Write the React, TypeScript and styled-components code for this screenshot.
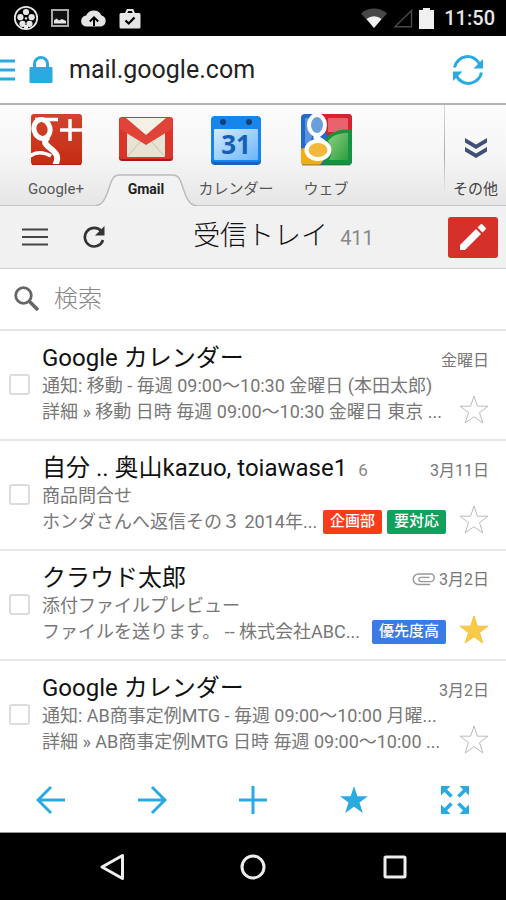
import React from "react";
import styled, { createGlobalStyle } from "styled-components";

const BLUE = "#29abe2";

const GlobalStyle = createGlobalStyle`
  *, *::before, *::after { box-sizing: border-box; }
  body {
    margin: 0;
    background: #fff;
    color: #111;
    font-family: Roboto, "Noto Sans CJK JP", sans-serif;
  }
  button, input { font: inherit; color: inherit; }
  svg { display: block; flex: none; }
`;

const Screen = styled.div`
  display: flex;
  flex-direction: column;
  min-height: 100vh;
`;

const IconButton = styled.button<{ $width?: number; $height?: number; $align?: string }>`
  display: flex;
  align-items: center;
  justify-content: ${(p) => p.$align ?? "center"};
  flex: none;
  width: ${(p) => (p.$width ? `${p.$width}px` : "auto")};
  height: ${(p) => (p.$height ? `${p.$height}px` : "auto")};
  padding: 0;
  border: 0;
  background: none;
  cursor: pointer;
`;

/* Status bar */

const StatusBar = styled.div`
  display: flex;
  align-items: center;
  justify-content: space-between;
  height: 36px;
  padding: 0 11px 0 13px;
  background: #000;
  color: #e6e6e6;
`;

const StatusGroup = styled.div<{ $gap: number }>`
  display: flex;
  align-items: center;
  gap: ${(p) => p.$gap}px;
`;

const Clock = styled.time`
  margin-left: 4px;
  font-size: 20px;
  line-height: 24px;
  font-weight: 500;
`;

/* Address bar */

const AddressBar = styled.header`
  display: flex;
  align-items: center;
  height: 69px;
  padding-right: 20px;
  border-bottom: 2px solid #b4b4b4;
  background: #fff;
`;

const Lock = styled.span`
  padding: 0 16px 0 13px;
`;

const UrlInput = styled.input`
  flex: 1;
  min-width: 0;
  height: 40px;
  padding: 0;
  border: 0;
  outline: 0;
  background: none;
  color: #222;
  font-size: 25px;
`;

/* Service launcher */

const Launcher = styled.nav`
  display: flex;
  height: 101px;
  padding-left: 11px;
  border-bottom: 1px solid #c4c4c4;
  background: linear-gradient(#fcfcfc, #f6f6f6 50%, #e6e6e6);
`;

const Service = styled.a`
  position: relative;
  display: flex;
  flex-direction: column;
  align-items: center;
  width: 90px;
  padding-top: 8px;
  color: #444;
  text-decoration: none;
`;

const ServiceLabel = styled.span<{ $active?: boolean }>`
  position: relative;
  margin-top: 12px;
  font-size: ${(p) => (p.$active ? 14 : 15)}px;
  line-height: 20px;
  white-space: nowrap;
  color: ${(p) => (p.$active ? "#222" : "#555")};
  font-weight: ${(p) => (p.$active ? 700 : 400)};
`;

const TabShape = styled.svg`
  position: absolute;
  left: 50%;
  bottom: -1px;
  margin-left: -50px;
`;

const More = styled.button`
  display: flex;
  flex-direction: column;
  align-items: center;
  width: 62px;
  margin: 0 0 0 auto;
  padding: 32px 0 0;
  border: 0;
  border-left: 1px solid;
  border-image: linear-gradient(#ddd, #aaa 50%, transparent 88%) 1;
  background: none;
  cursor: pointer;
`;

const MoreLabel = styled.span`
  margin-top: 20px;
  color: #444;
  font-size: 15px;
  line-height: 20px;
`;

/* Mailbox toolbar */

const Toolbar = styled.div`
  display: flex;
  align-items: center;
  height: 63px;
  padding: 0 8px 0 5px;
  border-bottom: 1px solid #cfcfcf;
  background: #f1f1f1;
`;

const MailboxTitle = styled.h1`
  display: flex;
  flex: 1;
  align-items: baseline;
  justify-content: center;
  gap: 12px;
  margin: 0;
  padding-right: 4px;
  font-size: 27px;
  line-height: 36px;
  font-weight: 300;
  color: #111;
`;

const UnreadCount = styled.span`
  color: #888;
  font-size: 20px;
  font-weight: 400;
`;

const ComposeButton = styled(IconButton)`
  width: 50px;
  height: 41px;
  border-radius: 3px;
  background: #d5302a;
`;

const SearchForm = styled.form`
  display: flex;
  align-items: center;
  gap: 14px;
  height: 62px;
  padding: 0 14px;
  border-bottom: 2px solid #e4e4e4;
`;

const SearchInput = styled.input`
  flex: 1;
  min-width: 0;
  height: 40px;
  padding: 0;
  border: 0;
  outline: 0;
  background: none;
  font-size: 24px;
  font-weight: 300;
  &::placeholder { color: #888; opacity: 1; }
`;

/* Message list */

const MessageList = styled.ul`
  flex: 1;
  margin: 0;
  padding: 0;
  list-style: none;
`;

const Message = styled.li`
  display: flex;
  align-items: center;
  padding: 12px 17px 14px 9px;
  border-bottom: 2px solid #e8e8e8;
  &:last-child { border-bottom: 0; padding-bottom: 11px; }
`;

const Check = styled.input`
  appearance: none;
  flex: none;
  width: 21px;
  height: 21px;
  margin: 0 12px 0 0;
  border: 2px solid #dcdcdc;
  border-radius: 3px;
  background: #fff;
  &:checked { background: ${BLUE}; }
`;

const MessageMain = styled.div`
  flex: 1;
  min-width: 0;
`;

const MessageHead = styled.div`
  display: flex;
  align-items: baseline;
  height: 30px;
  line-height: 30px;
`;

const Sender = styled.h2`
  margin: 0;
  font-size: 24px;
  font-weight: 400;
  color: #111;
  white-space: nowrap;
`;

const ThreadCount = styled.span`
  margin-left: 11px;
  color: #888;
  font-size: 17px;
`;

const MessageDate = styled.span`
  display: flex;
  align-items: center;
  gap: 4px;
  margin-left: auto;
  color: #777;
  font-size: 16px;
  white-space: nowrap;
`;

const MessageBody = styled.div`
  display: flex;
  align-items: flex-end;
`;

const Snippets = styled.div`
  flex: 1;
  min-width: 0;
`;

const SnippetLine = styled.div`
  display: flex;
  align-items: center;
  gap: 5px;
  height: 26px;
  color: #777;
  font-size: 18px;
  line-height: 26px;
`;

const SnippetText = styled.span`
  flex: 1;
  min-width: 0;
  white-space: nowrap;
`;

const Tag = styled.span<{ $color: string }>`
  flex: none;
  height: 24px;
  padding: 0 7px;
  border-radius: 2px;
  background: ${(p) => p.$color};
  color: #fff;
  font-size: 15px;
  line-height: 22px;
  font-weight: 500;
`;

/* Bottom bars */

const BrowserBar = styled.nav`
  display: grid;
  grid-template-columns: repeat(5, 1fr);
  justify-items: center;
  align-items: center;
  height: 66px;
  border-bottom: 1px solid #999;
  background: #fff;
`;

const SystemBar = styled.nav`
  display: grid;
  grid-template-columns: repeat(3, 28%);
  justify-content: center;
  justify-items: center;
  align-items: center;
  height: 67px;
  background: #000;
`;

/* Icons */

const STAR = "M15 1 L18.4 11.2 H29 L20.5 17.6 L23.8 28 L15 21.7 L6.2 28 L9.5 17.6 L1 11.2 H11.6 Z";

function Reel() {
  return (
    <svg width="26" height="26" viewBox="0 0 26 26">
      <circle cx="13" cy="13" r="11.2" fill="none" stroke="#e6e6e6" strokeWidth="1.8" />
      <g fill="#e6e6e6">
        <circle cx="13" cy="7" r="3.1" />
        <circle cx="7.4" cy="12.2" r="3.1" />
        <circle cx="18.6" cy="12.2" r="3.1" />
        <circle cx="9.5" cy="18.8" r="3.1" />
        <circle cx="16.5" cy="18.8" r="3.1" />
        <circle cx="13" cy="13.4" r="1.2" />
        <path d="M11 20h4v4h-4z" />
      </g>
    </svg>
  );
}

function Picture() {
  return (
    <svg width="18" height="18" viewBox="0 0 18 18">
      <rect x="1" y="1" width="16" height="16" fill="#111" stroke="#aaa" strokeWidth="2" />
      <path d="M3 14.5v-3l2.5-2 2.5 2 3-1.5 4 2v2.5z" fill="#e6e6e6" />
    </svg>
  );
}

function CloudUp() {
  return (
    <svg width="26" height="18" viewBox="0 0 26 18">
      <path d="M6 17.5a5.5 5.5 0 0 1-.8-11A8.4 8.4 0 0 1 20.6 6.6 5.6 5.6 0 0 1 20 17.5Z" fill="#e6e6e6" />
      <path d="M13 17V9.500M8.800 12.500 13 8.300l4.200 4.200" fill="none" stroke="#000" strokeWidth="2" />
    </svg>
  );
}

function BagCheck() {
  return (
    <svg width="22" height="21" viewBox="0 0 22 21">
      <rect x="0.500" y="5" width="21" height="15.500" rx="1.500" fill="#e6e6e6" />
      <path d="M7 5.500 8.500 2h5L15 5.500" fill="none" stroke="#e6e6e6" strokeWidth="2" />
      <path d="m6.500 12.500 3.200 3 5.800-6" fill="none" stroke="#000" strokeWidth="2.200" />
    </svg>
  );
}

function Wifi() {
  return (
    <svg width="26" height="20" viewBox="0 0 26 20">
      <path d="M0 5.500a19.500 19.500 0 0 1 26 0L13 20Z" fill="#484848" />
      <path d="M5.500 11a11.500 11.500 0 0 1 15 0L13 20Z" fill="#f2f2f2" />
    </svg>
  );
}

function Signal() {
  return (
    <svg width="20" height="20" viewBox="0 0 20 20">
      <path d="M2 18.800H18.500V2.500Z" fill="none" stroke="#484848" strokeWidth="1.500" />
    </svg>
  );
}

function Battery() {
  return (
    <svg width="15" height="21" viewBox="0 0 15 21">
      <path d="M4 0h7v2h4v19H0V2h4z" fill="#f0f0f0" />
    </svg>
  );
}

function SideMenu() {
  return (
    <svg width="16" height="22" viewBox="0 0 16 22">
      <path d="M0 2h15M0 11h15M0 20h15" stroke={BLUE} strokeWidth="3" />
    </svg>
  );
}

function Padlock() {
  return (
    <svg width="24" height="27" viewBox="0 0 24 27">
      <rect x="0.500" y="11" width="23" height="16" rx="1" fill={BLUE} />
      <path d="M5.500 12V8a6.500 6.500 0 0 1 13 0v4" fill="none" stroke={BLUE} strokeWidth="3" />
    </svg>
  );
}

function Sync() {
  return (
    <svg width="32" height="32" viewBox="0 0 32 32">
      <path d="M2.500 13.500A13.300 13.300 0 0 1 27.500 10" fill="none" stroke={BLUE} strokeWidth="3" />
      <path d="M31 5v9.500h-9.500z" fill={BLUE} />
      <path d="M29.500 18.500A13.300 13.300 0 0 1 4.500 22" fill="none" stroke={BLUE} strokeWidth="3" />
      <path d="M1 27v-9.500h9.500z" fill={BLUE} />
    </svg>
  );
}

function PlusLogo() {
  return (
    <svg width="52" height="54" viewBox="0 0 52 54">
      <defs>
        <linearGradient id="plusRed" x1="0" y1="0" x2="0" y2="1">
          <stop offset="0" stopColor="#d2432e" />
          <stop offset="1" stopColor="#c42c12" />
        </linearGradient>
        <clipPath id="plusClip"><rect x="1" y="1" width="51" height="51" rx="3" /></clipPath>
      </defs>
      <rect x="1" y="1" width="51" height="51" rx="3" fill="url(#plusRed)" />
      <g clipPath="url(#plusClip)" fill="none" stroke="#fff">
        <ellipse cx="12" cy="16" rx="8" ry="9.500" strokeWidth="5" transform="rotate(-14 12 16)" />
        <path d="M5 6.500h23" strokeWidth="3.500" />
        <path d="M18 24c-5 5-3 7 2 11s8 7 7 12-2 5-3 8" strokeWidth="6" />
        <path d="M0 43c7-5 14-4 21 0" strokeWidth="3.500" />
        <path d="M40 6v22M30 17h24" strokeWidth="3.500" />
      </g>
      <path d="M2 51.500h49" stroke="#9f2412" strokeWidth="1" />
    </svg>
  );
}

function MailLogo() {
  return (
    <svg width="56" height="54" viewBox="0 0 56 54">
      <rect x="1" y="5" width="54" height="43" rx="3" fill="#a91b17" />
      <rect x="1" y="4" width="54" height="42" rx="3" fill="#d9352b" />
      <rect x="9" y="5" width="38" height="39" fill="#e8e4d4" />
      <path d="M7 5h42L28 25z" fill="#f4f1e4" />
      <path d="M9 44 23 28M47 44 33 28" stroke="#c7c2b0" strokeWidth="1" />
      <path d="M2 5h6l20 17L48 5h6v11L28 32 2 16z" fill="#e04337" />
    </svg>
  );
}

function CalendarLogo() {
  return (
    <svg width="52" height="54" viewBox="0 0 52 54">
      <defs>
        <linearGradient id="calPage" x1="0" y1="0" x2="1" y2="1">
          <stop offset="0" stopColor="#d5ecff" />
          <stop offset="1" stopColor="#6bb5f7" />
        </linearGradient>
      </defs>
      <rect x="1" y="4" width="50" height="48" rx="4" fill="#1463bd" />
      <rect x="1" y="3" width="50" height="46" rx="4" fill="#1686ec" />
      <rect x="4" y="16" width="44" height="31" rx="1" fill="url(#calPage)" />
      <circle cx="13" cy="9" r="3" fill="#123f73" />
      <circle cx="39" cy="9" r="3" fill="#123f73" />
      <text x="26" y="41" textAnchor="middle" fontFamily="Open Sans, sans-serif" fontWeight="700" fontSize="26" fill="#1560b4">31</text>
    </svg>
  );
}

function SearchLogo() {
  return (
    <svg width="52" height="54" viewBox="0 0 52 54">
      <defs>
        <clipPath id="webClip"><rect x="1" y="1" width="51" height="51" rx="4" /></clipPath>
        <linearGradient id="webGreen" x1="0" y1="0" x2="1" y2="1">
          <stop offset="0" stopColor="#8ed07f" />
          <stop offset="1" stopColor="#2c9e42" />
        </linearGradient>
      </defs>
      <g clipPath="url(#webClip)">
        <rect width="52" height="54" fill="#2369c9" />
        <path d="M5 5h12L10 31H5z" fill="#5c94de" />
        <path d="M21 0h31v22H27z" fill="#dc1f2c" />
        <path d="M28 5h20v14H28z" fill="#e8636d" />
        <path d="M20 54c8-8 8-16 4-26 6-9 16-13 28-11v37z" fill="#159440" />
        <path d="M29 47c4-8 3-13-1-19 5-6 11-8 20-8v27z" fill="url(#webGreen)" />
        <path d="M0 36c6-2 14-2 24 4 2 6-2 10-6 14H0z" fill="#f5ad13" />
        <ellipse cx="17" cy="12" rx="8" ry="10" fill="#6a9edc" stroke="#fff" strokeWidth="4" />
        <path d="M17 22c-1 5 2 5 6 8" fill="none" stroke="#fff" strokeWidth="7" />
        <ellipse cx="18" cy="37" rx="11.500" ry="9" fill="#f1b83b" stroke="#fff" strokeWidth="4" />
      </g>
      <path d="M2 52h48" stroke="#14572c" strokeOpacity=".6" />
    </svg>
  );
}

function DoubleChevron() {
  return (
    <svg width="24" height="22" viewBox="0 0 24 22">
      <path d="M1 1v4.500L12 12 23 5.500V1L12 7.500zM1 10v4.500L12 21 23 14.500V10L12 16.500z" fill="#3f5176" />
    </svg>
  );
}

function Hamburger() {
  return (
    <svg width="26" height="18" viewBox="0 0 26 18">
      <path d="M0 1.500h26M0 9h26M0 16.500h26" stroke="#444" strokeWidth="2.200" />
    </svg>
  );
}

function Reload() {
  return (
    <svg width="24" height="24" viewBox="0 0 24 24">
      <path d="M19.500 6.500A9.300 9.300 0 1 0 21 15" fill="none" stroke="#333" strokeWidth="2.600" />
      <path d="M22.500 1v9.500H13z" fill="#333" />
    </svg>
  );
}

function Pencil() {
  return (
    <svg width="28" height="28" viewBox="0 0 28 28">
      <path d="M1 22 17 6l5 5L6 27H1zM18.500 4.500l3-3q1-1 2 0l3 3q1 1 0 2l-3 3z" fill="#fff" />
    </svg>
  );
}

function Magnifier() {
  return (
    <svg width="26" height="26" viewBox="0 0 26 26">
      <circle cx="9.500" cy="9.500" r="7.800" fill="none" stroke="#666" strokeWidth="2.800" />
      <path d="m15.500 15.500 8.500 8.500" stroke="#666" strokeWidth="3.600" />
    </svg>
  );
}

function StarIcon({ filled }: { filled?: boolean }) {
  return (
    <svg width="30" height="30" viewBox="0 0 30 30">
      <path d={STAR} fill={filled ? "#f9ca47" : "none"} stroke={filled ? "#f4c244" : "#bbb"} strokeWidth="1" />
    </svg>
  );
}

function Clip() {
  return (
    <svg width="23" height="13" viewBox="0 0 23 13">
      <path
        d="M18 11.500H6.500a5.200 5.200 0 0 1 0-10.500H18.500a3.700 3.700 0 0 1 0 7.600H9a2.100 2.100 0 0 1 0-4.200h8.500"
        fill="none" stroke="#999" strokeWidth="1.400"
      />
    </svg>
  );
}

function Arrow({ forward }: { forward?: boolean }) {
  return (
    <svg width="30" height="30" viewBox="0 0 30 30">
      <path
        d={forward ? "M1 15h26M15 2l13 13-13 13" : "M29 15H3M15 2 2 15l13 13"}
        fill="none" stroke={BLUE} strokeWidth="3"
      />
    </svg>
  );
}

function Plus() {
  return (
    <svg width="30" height="30" viewBox="0 0 30 30">
      <path d="M1 15h28M15 1v28" stroke={BLUE} strokeWidth="3" />
    </svg>
  );
}

function Bookmark() {
  return (
    <svg width="30" height="30" viewBox="0 0 30 30">
      <path d={STAR} fill={BLUE} />
    </svg>
  );
}

function Expand() {
  return (
    <svg width="30" height="30" viewBox="0 0 30 30">
      <path d="M1 1h9.500L1 10.500zM29 1v9.500L19.500 1zM1 29v-9.500l9.500 9.500zM29 29h-9.500l9.500-9.500z" fill={BLUE} />
      <path d="m4 4 7.500 7.500M26 4l-7.500 7.500M4 26l7.500-7.500M26 26l-7.500-7.500" stroke={BLUE} strokeWidth="3.600" />
    </svg>
  );
}

const navStroke = { fill: "none", stroke: "#eee", strokeWidth: 3 };

const services = [
  { label: "Google+", logo: <PlusLogo /> },
  { label: "Gmail", logo: <MailLogo />, active: true },
  { label: "カレンダー", logo: <CalendarLogo /> },
  { label: "ウェブ", logo: <SearchLogo /> },
];

type Mail = {
  sender: string;
  count?: number;
  date: string;
  subject: string;
  text: string;
  tags?: { label: string; color: string }[];
  attachment?: boolean;
  starred?: boolean;
};

const mails: Mail[] = [
  {
    sender: "Google カレンダー",
    date: "金曜日",
    subject: "通知: 移動 - 毎週 09:00～10:30 金曜日 (本田太郎)",
    text: "詳細 » 移動 日時 毎週 09:00～10:30 金曜日 東京 ...",
  },
  {
    sender: "自分 .. 奥山kazuo, toiawase1",
    count: 6,
    date: "3月11日",
    subject: "商品問合せ",
    text: "ホンダさんへ返信その３ 2014年...",
    tags: [
      { label: "企画部", color: "#fb3c1c" },
      { label: "要対応", color: "#12a05c" },
    ],
  },
  {
    sender: "クラウド太郎",
    date: "3月2日",
    subject: "添付ファイルプレビュー",
    text: "ファイルを送ります。 -- 株式会社ABC...",
    tags: [{ label: "優先度高", color: "#3b7be6" }],
    attachment: true,
    starred: true,
  },
  {
    sender: "Google カレンダー",
    date: "3月2日",
    subject: "通知: AB商事定例MTG - 毎週 09:00～10:00 月曜...",
    text: "詳細 » AB商事定例MTG 日時 毎週 09:00～10:00 ...",
  },
];

function MessageRow({ mail }: { mail: Mail }) {
  return (
    <Message>
      <Check type="checkbox" aria-label={mail.sender} />
      <MessageMain>
        <MessageHead>
          <Sender>{mail.sender}</Sender>
          {mail.count && <ThreadCount>{mail.count}</ThreadCount>}
          <MessageDate>
            {mail.attachment && <Clip />}
            {mail.date}
          </MessageDate>
        </MessageHead>
        <MessageBody>
          <Snippets>
            <SnippetLine><SnippetText>{mail.subject}</SnippetText></SnippetLine>
            <SnippetLine>
              <SnippetText>{mail.text}</SnippetText>
              {mail.tags?.map((tag) => (
                <Tag key={tag.label} $color={tag.color}>{tag.label}</Tag>
              ))}
            </SnippetLine>
          </Snippets>
          <IconButton $width={43} $height={30} $align="flex-end" aria-label="スター" aria-pressed={!!mail.starred}>
            <StarIcon filled={mail.starred} />
          </IconButton>
        </MessageBody>
      </MessageMain>
    </Message>
  );
}

export default function App() {
  return (
    <Screen>
      <GlobalStyle />
      <StatusBar>
        <StatusGroup $gap={12}>
          <Reel />
          <Picture />
          <CloudUp />
          <BagCheck />
        </StatusGroup>
        <StatusGroup $gap={6}>
          <Wifi />
          <Signal />
          <Battery />
          <Clock>11:50</Clock>
        </StatusGroup>
      </StatusBar>

      <AddressBar>
        <IconButton $width={16} $height={40} aria-label="メニュー"><SideMenu /></IconButton>
        <Lock><Padlock /></Lock>
        <UrlInput aria-label="URL" defaultValue="mail.google.com" />
        <IconButton $width={36} $height={40} aria-label="再読み込み"><Sync /></IconButton>
      </AddressBar>

      <Launcher>
        {services.map((s) => (
          <Service key={s.label} href="#" aria-current={s.active ? "page" : undefined}>
            {s.active && (
              <TabShape width="100" height="32" viewBox="0 0 100 32">
                <path
                  d="M0 32V31C10 31 12 14 16 6Q18 1 24 1H76Q82 1 84 6C88 14 90 31 100 31V32Z"
                  fill="#f2f2f2"
                />
                <path
                  d="M0 31.500C10 31 12 14 16 6Q18 1 24 1H76Q82 1 84 6C88 14 90 31 100 31.500"
                  fill="none" stroke="#bbb" strokeWidth="1.500"
                />
              </TabShape>
            )}
            {s.logo}
            <ServiceLabel $active={s.active}>{s.label}</ServiceLabel>
          </Service>
        ))}
        <More>
          <DoubleChevron />
          <MoreLabel>その他</MoreLabel>
        </More>
      </Launcher>

      <Toolbar>
        <IconButton $width={59} $height={48} aria-label="メインメニュー"><Hamburger /></IconButton>
        <IconButton $width={59} $height={48} aria-label="更新"><Reload /></IconButton>
        <MailboxTitle>
          受信トレイ
          <UnreadCount>411</UnreadCount>
        </MailboxTitle>
        <ComposeButton aria-label="作成"><Pencil /></ComposeButton>
      </Toolbar>

      <SearchForm>
        <Magnifier />
        <SearchInput type="text" aria-label="検索" placeholder="検索" />
      </SearchForm>

      <MessageList>
        {mails.map((mail, i) => <MessageRow key={i} mail={mail} />)}
      </MessageList>

      <BrowserBar>
        <IconButton $width={48} $height={48} aria-label="戻る"><Arrow /></IconButton>
        <IconButton $width={48} $height={48} aria-label="進む"><Arrow forward /></IconButton>
        <IconButton $width={48} $height={48} aria-label="新しいタブ"><Plus /></IconButton>
        <IconButton $width={48} $height={48} aria-label="ブックマーク"><Bookmark /></IconButton>
        <IconButton $width={48} $height={48} aria-label="全画面"><Expand /></IconButton>
      </BrowserBar>

      <SystemBar>
        <IconButton $width={48} $height={48} aria-label="バック">
          <svg width="28" height="28" viewBox="0 0 28 28">
            <path d="M25.500 2.500v23L5 14z" strokeLinejoin="round" {...navStroke} />
          </svg>
        </IconButton>
        <IconButton $width={48} $height={48} aria-label="ホーム">
          <svg width="26" height="26" viewBox="0 0 26 26">
            <circle cx="13" cy="13" r="11" {...navStroke} />
          </svg>
        </IconButton>
        <IconButton $width={48} $height={48} aria-label="履歴">
          <svg width="24" height="24" viewBox="0 0 24 24">
            <rect x="2" y="2" width="20" height="20" rx="1" {...navStroke} />
          </svg>
        </IconButton>
      </SystemBar>
    </Screen>
  );
}
